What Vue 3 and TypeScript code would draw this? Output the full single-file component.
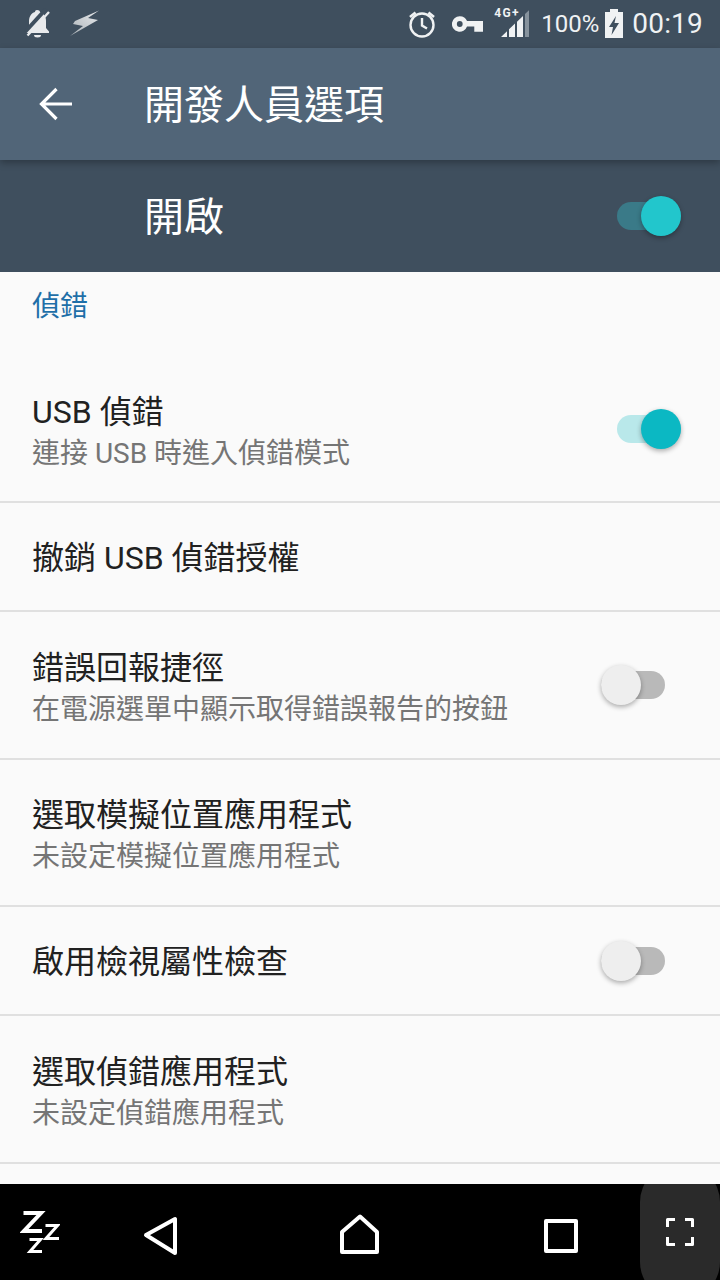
<script setup lang="ts">
interface Row {
  title: string
  sub?: string
  toggle?: boolean
  tall: boolean
}

const rows: Row[] = [
  { title: "USB 偵錯", sub: "連接 USB 時進入偵錯模式", toggle: true, tall: true },
  { title: "撤銷 USB 偵錯授權", tall: false },
  { title: "錯誤回報捷徑", sub: "在電源選單中顯示取得錯誤報告的按鈕", toggle: false, tall: true },
  { title: "選取模擬位置應用程式", sub: "未設定模擬位置應用程式", tall: true },
  { title: "啟用檢視屬性檢查", toggle: false, tall: false },
  { title: "選取偵錯應用程式", sub: "未設定偵錯應用程式", tall: true },
]
</script>

<template>
  <div class="screen">
    <div class="status">
      <div class="status-left">
        <svg width="28" height="32" viewBox="0 0 28 32">
          <path d="M13 2c-1.200 0-2 .8-2 2-4 1-6 5-6 9v7l-3 3.500v1.500h23v-1.500L22 20v-7c0-4-2-8-6-9 0-1.200-1.200-2-3-2z" fill="#e8eaec" />
          <path d="M10 27h7a3.500 2.500 0 0 1-7 0z" fill="#e8eaec" />
          <path d="M1 24 22 1" stroke="#3f4f5e" stroke-width="4" />
          <path d="M3.500 27.500 25 4" stroke="#e8eaec" stroke-width="2.400" />
        </svg>
        <svg width="30" height="28" viewBox="0 0 30 28">
          <defs>
            <linearGradient id="bolt" x1="1" y1="0" x2="0" y2="1">
              <stop offset="0" stop-color="#e8eaec" />
              <stop offset="1" stop-color="#a9b0b6" />
            </linearGradient>
          </defs>
          <path d="M29 .5 5 11l-2 3 10 2L0 26l28-16-10-2z" fill="url(#bolt)" />
        </svg>
      </div>
      <div class="status-right">
        <svg width="30" height="30" viewBox="0 0 30 30" fill="none" stroke="#f0f2f3" stroke-width="2.400">
          <circle cx="15" cy="16" r="11.500" />
          <path d="M15 9v7.500l5 3" />
          <path d="M3 8l5.500-4.500M27 8l-5.500-4.500" stroke-width="2.600" />
        </svg>
        <svg width="31" height="16" viewBox="0 0 32 16" class="key">
          <path d="M8 0a8 8 0 1 0 7.500 10.500H23V16h9V5H15.500A8 8 0 0 0 8 0zm0 5a3 3 0 1 1 0 6 3 3 0 0 1 0-6z" fill="#f0f2f3" fill-rule="evenodd" />
        </svg>
        <div class="signal">
          <span class="net">4G+</span>
          <svg width="30" height="30" viewBox="0 0 30 30">
            <path d="M1 29l6-5.800V29zM9 29v-7.700l6-5.700v13.400zM17 29V13.700L23 8v21z" fill="#f0f2f3" />
            <path d="M25 29V6l4-3.800V29z" fill="#87939d" />
          </svg>
        </div>
        <span class="pct">100%</span>
        <svg width="20" height="32" viewBox="0 0 20 32" class="battery">
          <path d="M6 1h8v3h5v26H1V4h5z" fill="#f0f2f3" />
          <path d="M12 8 5 19h4l-1.500 8L15 15h-4.500z" fill="#3f4f5e" />
        </svg>
        <span class="clock">00:19</span>
      </div>
    </div>

    <header class="toolbar">
      <svg class="back" width="36" height="36" viewBox="0 0 36 36" fill="none" stroke="#fff" stroke-width="3.200">
        <path d="M33 18H3M17.500 3 2.500 18 17.500 33" />
      </svg>
      <h1 class="title">開發人員選項</h1>
    </header>

    <div class="master">
      <span class="title">開啟</span>
      <div class="switch on bright"><i class="track"></i><i class="thumb"></i></div>
    </div>

    <main class="list">
      <div class="category">偵錯</div>
      <div v-for="row in rows" :key="row.title" :class="['row', { tall: row.tall }]">
        <div class="row-text">
          <div class="row-title">{{ row.title }}</div>
          <div v-if="row.sub" class="row-sub">{{ row.sub }}</div>
        </div>
        <div v-if="row.toggle !== undefined" :class="['switch', { on: row.toggle }]">
          <i class="track"></i><i class="thumb"></i>
        </div>
      </div>
    </main>

    <nav class="nav">
      <svg class="zzz" width="40" height="48" viewBox="0 0 40 48" fill="none" stroke="#fff">
        <path d="M3.500 5H21L4 23h18" stroke-width="4" />
        <path d="M25.500 17.500h12L26 30.500h13" stroke-width="3" />
        <path d="M9.500 31.500h11L10 43.500h12" stroke-width="3" />
      </svg>
      <svg class="nav-back" width="36" height="40" viewBox="0 0 36 40" fill="none" stroke="#fff" stroke-width="4" stroke-linejoin="round">
        <path d="M33 3v34L4 19z" />
      </svg>
      <svg class="nav-home" width="40" height="40" viewBox="0 0 40 40" fill="none" stroke="#fff" stroke-width="4" stroke-linejoin="round">
        <path d="M20 2.500 37 18v20H2V18z" />
      </svg>
      <svg class="nav-recent" width="34" height="34" viewBox="0 0 34 34" fill="none" stroke="#fff" stroke-width="4" stroke-linejoin="round">
        <rect x="2" y="2" width="30" height="30" />
      </svg>
      <div class="expand">
        <svg width="28" height="28" viewBox="0 0 28 28" fill="none" stroke="#fff" stroke-width="3" stroke-linejoin="round">
          <path d="M1.500 9V1.500H9M19 1.500h7.500V9M1.500 19v7.500H9M26.500 19v7.500H19" />
        </svg>
      </div>
    </nav>
  </div>
</template>

<style>
html,
body {
  margin: 0;
  background: #fafafa;
}
</style>

<style scoped>
.screen {
  width: 720px;
  height: 1280px;
  display: flex;
  flex-direction: column;
  overflow: hidden;
  font-family: Roboto, "Noto Sans CJK TC", sans-serif;
  background: #fafafa;
}

.status {
  height: 48px;
  flex: none;
  background: #3f4f5e;
  display: flex;
  justify-content: space-between;
  align-items: center;
  padding: 0 17px 0 24px;
  box-sizing: border-box;
}

.status-left {
  display: flex;
  align-items: center;
  gap: 18px;
}

.status-left svg {
  display: block;
}

.status-right {
  display: flex;
  align-items: center;
  color: #f0f2f3;
}

.status-right svg {
  display: block;
}

.key {
  margin-left: 15px;
}

.signal {
  position: relative;
  width: 36px;
  height: 48px;
  margin-left: 11px;
}

.signal svg {
  position: absolute;
  left: 6px;
  top: 8px;
}

.net {
  position: absolute;
  left: 0;
  top: 6px;
  font-size: 12px;
  font-weight: 700;
  line-height: 14px;
  letter-spacing: 1.400px;
}

.pct {
  font-size: 24px;
  line-height: 48px;
  margin-left: 11px;
}

.battery {
  margin-left: 5px;
}

.clock {
  font-size: 28px;
  line-height: 48px;
  margin-left: 8px;
  letter-spacing: 0.2px;
}

.toolbar {
  height: 112px;
  flex: none;
  background: #516578;
  display: flex;
  align-items: center;
  box-shadow: 0 3px 7px rgba(0, 0, 0, 0.28);
  position: relative;
  z-index: 1;
}

.back {
  margin-left: 39px;
  margin-right: 69px;
  flex: none;
}

.title {
  margin: 0;
  padding-top: 4px;
  font-size: 40px;
  font-weight: 400;
  color: #fff;
  line-height: 56px;
}

.master {
  height: 112px;
  flex: none;
  background: #3f4f5e;
  display: flex;
  align-items: center;
  justify-content: space-between;
  padding: 0 39px 0 144px;
  box-sizing: border-box;
}

.list {
  flex: 1;
  min-height: 0;
}

.category {
  height: 84px;
  padding: 16px 32px 0;
  box-sizing: border-box;
  font-size: 28px;
  line-height: 38px;
  color: #1f6fa8;
}

.row {
  height: 109px;
  box-sizing: border-box;
  border-bottom: 2px solid #e0e0e0;
  padding: 0 39px 0 32px;
  display: flex;
  align-items: center;
  justify-content: space-between;
}

.row.tall {
  height: 147.400px;
}

.row-text {
  padding-top: 2px;
}

.row.tall .row-text {
  padding-top: 5px;
}

.row-title {
  font-size: 32px;
  line-height: 44px;
  color: #212121;
}

.row-sub {
  margin-top: 1px;
  font-size: 28px;
  line-height: 38px;
  color: #757575;
}

.switch {
  position: relative;
  width: 64px;
  height: 40px;
  flex: none;
  margin-right: 16px;
}

.switch.on {
  margin-right: 0;
}

.switch .track {
  position: absolute;
  left: 0;
  top: 6px;
  width: 64px;
  height: 28px;
  border-radius: 14px;
  background: #b9b9b9;
}

.switch .thumb {
  position: absolute;
  left: 0;
  top: 0;
  width: 40px;
  height: 40px;
  border-radius: 50%;
  background: #eeeeee;
  box-shadow: 0 2px 5px rgba(0, 0, 0, 0.32);
}

.switch.on .track {
  background: #b9e8ea;
}

.switch.on .thumb {
  left: 24px;
  background: #0bb8c3;
}

.switch.bright .track {
  background: #3a7a88;
}

.switch.bright .thumb {
  background: #22c6cc;
}

.nav {
  height: 96px;
  flex: none;
  background: #000;
  position: relative;
  overflow: hidden;
}

.nav svg {
  position: absolute;
}

.zzz {
  left: 20px;
  top: 24px;
}

.nav-back {
  left: 142px;
  top: 32px;
}

.nav-home {
  left: 340px;
  top: 30px;
}

.nav-recent {
  left: 544px;
  top: 35px;
}

.expand {
  position: absolute;
  left: 640px;
  top: -20px;
  bottom: -20px;
  width: 80px;
  background: #2a2a2a;
  border-radius: 38px;
}

.expand svg {
  left: 26px;
  top: 54px;
}
</style>
